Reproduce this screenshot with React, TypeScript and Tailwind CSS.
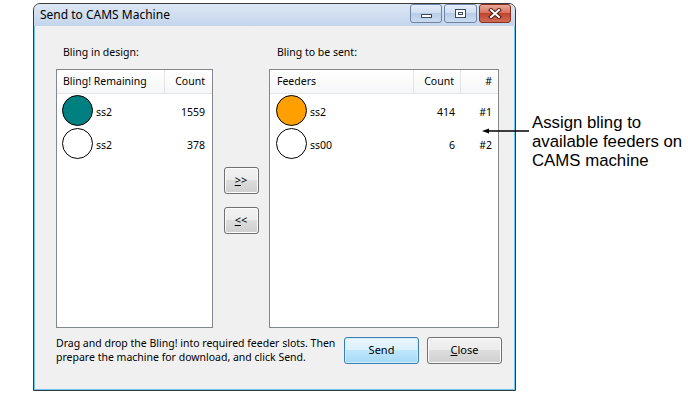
import React from 'react';

const ui = { fontFamily: '"Noto Sans", "Open Sans", sans-serif' };

type Row = { color: string; name: string; count: number; slot?: string };

const remaining: Row[] = [
  { color: 'bg-[#008080]', name: 'ss2', count: 1559 },
  { color: 'bg-white', name: 'ss2', count: 378 },
];

const feeders: Row[] = [
  { color: 'bg-[#ffa000]', name: 'ss2', count: 414, slot: '#1' },
  { color: 'bg-white', name: 'ss00', count: 6, slot: '#2' },
];

const Dot: React.FC<{ color: string }> = ({ color }) => (
  <div className={`w-[31px] h-[31px] shrink-0 rounded-full border border-black ${color}`} />
);

const PushButton: React.FC<{ children: React.ReactNode; primary?: boolean; className?: string }> = ({
  children,
  primary,
  className = '',
}) => (
  <button
    className={`flex items-center justify-center rounded-[3px] border text-[11px] text-black ${
      primary
        ? 'border-[#3c7fb1] bg-[linear-gradient(#eaf6fd,#d9f0fc_50%,#bee6fd_50%,#a7d9f5)] shadow-[inset_0_0_0_1px_#cdeefc]'
        : 'border-[#707070] bg-[linear-gradient(#f2f2f2,#ebebeb_50%,#dddddd_50%,#cfcfcf)] shadow-[inset_0_0_0_1px_#fcfcfc]'
    } ${className}`}
  >
    {children}
  </button>
);

const TitleBar: React.FC = () => (
  <div className="h-[22px] flex items-start justify-between rounded-t-[6px] bg-[linear-gradient(#dce7f5,#c3d5ec)]">
    <div className="pl-[6px] pt-[3px] text-[12px] leading-[16px] text-black">Send to CAMS Machine</div>
    <div className="flex gap-[2px] pr-[4px]">
      <div className="w-[32px] h-[19px] rounded-[3px] border border-[#6d84a3] bg-[linear-gradient(#e6eefa,#cfdef0_45%,#b9cde6_50%,#cadbf0)] flex items-end justify-center pb-[4px]">
        <div className="w-[11px] h-[4px] bg-white border border-[#3a4a5e]" />
      </div>
      <div className="w-[33px] h-[19px] rounded-[3px] border border-[#6d84a3] bg-[linear-gradient(#e6eefa,#cfdef0_45%,#b9cde6_50%,#cadbf0)] flex items-center justify-center">
        <div className="w-[11px] h-[9px] bg-white border border-[#3a4a5e] flex items-center justify-center">
          <div className="w-[5px] h-[3px] border border-[#3a4a5e]" />
        </div>
      </div>
      <div className="w-[32px] h-[19px] rounded-[3px] border border-[#8a2f20] bg-[linear-gradient(#eaa99b,#d8735f_45%,#c4432d_50%,#d06c57)] flex items-center justify-center">
        <svg width="14" height="11" viewBox="0 0 14 11">
          <path d="M3 2 L11 9 M11 2 L3 9" stroke="#4a1a12" strokeWidth="4" strokeLinecap="square" />
          <path d="M3 2 L11 9 M11 2 L3 9" stroke="#ffffff" strokeWidth="2" strokeLinecap="square" />
        </svg>
      </div>
    </div>
  </div>
);

const RemainingList: React.FC = () => (
  <div className="w-[157px] h-[259px] border border-[#828790] bg-white flex flex-col">
    <div className="h-[24px] flex border-b border-[#e5e5e5] bg-[linear-gradient(#ffffff,#f6f7f8)] text-[10.5px] leading-[23px]">
      <div className="w-[108px] border-r border-[#e5e5e5] pl-[6px]">Bling! Remaining</div>
      <div className="flex-1 text-right pr-[7px]">Count</div>
    </div>
    {remaining.map((r, i) => (
      <div key={i} className="h-[33px] flex items-center text-[10.5px]">
        <div className="w-[108px] flex items-center pl-[5px]">
          <Dot color={r.color} />
          <span className="ml-[3px] pt-[4px]">{r.name}</span>
        </div>
        <div className="flex-1 text-right pr-[7px] pt-[4px]">{r.count}</div>
      </div>
    ))}
  </div>
);

const FeederList: React.FC = () => (
  <div className="w-[230px] h-[259px] border border-[#828790] bg-white flex flex-col">
    <div className="h-[24px] flex border-b border-[#e5e5e5] bg-[linear-gradient(#ffffff,#f6f7f8)] text-[10.5px] leading-[23px]">
      <div className="w-[144px] border-r border-[#e5e5e5] pl-[7px]">Feeders</div>
      <div className="w-[47px] border-r border-[#e5e5e5] text-right pr-[6px]">Count</div>
      <div className="flex-1 text-right pr-[6px]">#</div>
    </div>
    {feeders.map((r, i) => (
      <div key={i} className="h-[33px] flex items-center text-[10.5px]">
        <div className="w-[144px] flex items-center pl-[6px]">
          <Dot color={r.color} />
          <span className="ml-[3px] pt-[4px]">{r.name}</span>
        </div>
        <div className="w-[47px] text-right pr-[6px] pt-[4px]">{r.count}</div>
        <div className="flex-1 text-right pr-[6px] pt-[4px]">{r.slot}</div>
      </div>
    ))}
  </div>
);

export default function App() {
  return (
    <div className="relative w-[688px] h-[393px] bg-white pl-[33px] pt-[3px] overflow-hidden" style={ui}>
      <div className="w-[483px] h-[388px] border border-[#3b3b3b] rounded-t-[7px] flex flex-col bg-[#c4d6ec]">
        <TitleBar />
        <div className="flex-1 border-x border-b border-[#6cc6ef] bg-[#f0f0f0] pl-[21px] pt-[19px] text-black">
          <div className="flex h-[14px] text-[10.5px] leading-[14px]">
            <div className="w-[213px] pl-[7px]">Bling in design:</div>
            <div className="pl-[8px]">Bling to be sent:</div>
          </div>
          <div className="flex mt-[10px]">
            <RemainingList />
            <div className="w-[56px] flex flex-col items-center pt-[98px]">
              <PushButton className="w-[35px] h-[27px]">
                <span className="underline">&gt;</span>&gt;
              </PushButton>
              <PushButton className="w-[35px] h-[27px] mt-[13px]">
                <span className="underline">&lt;</span>&lt;
              </PushButton>
            </div>
            <FeederList />
          </div>
          <div className="flex items-start mt-[9px]">
            <div className="w-[288px] -mt-[1px] text-[10.5px] leading-[14px]">
              Drag and drop the Bling! into required feeder slots. Then prepare the machine for download, and click Send.
            </div>
            <PushButton primary className="w-[75px] h-[27px]">
              Send
            </PushButton>
            <PushButton className="w-[75px] h-[27px] ml-[8px]">
              <span className="underline">C</span>lose
            </PushButton>
          </div>
        </div>
      </div>

      <svg className="absolute left-[481px] top-[127px]" width="48" height="8" viewBox="0 0 48 8">
        <line x1="4" y1="4" x2="48" y2="4" stroke="#000" strokeWidth="1.4" />
        <polygon points="1,4 8,1.5 8,6.5" fill="#000" />
      </svg>
      <div
        className="absolute left-[532px] top-[113px] text-[16.8px] leading-[19px] text-black"
        style={{ fontFamily: '"Liberation Sans", Arial, sans-serif' }}
      >
        Assign bling to
        <br />
        available feeders on
        <br />
        CAMS machine
      </div>
    </div>
  );
}
